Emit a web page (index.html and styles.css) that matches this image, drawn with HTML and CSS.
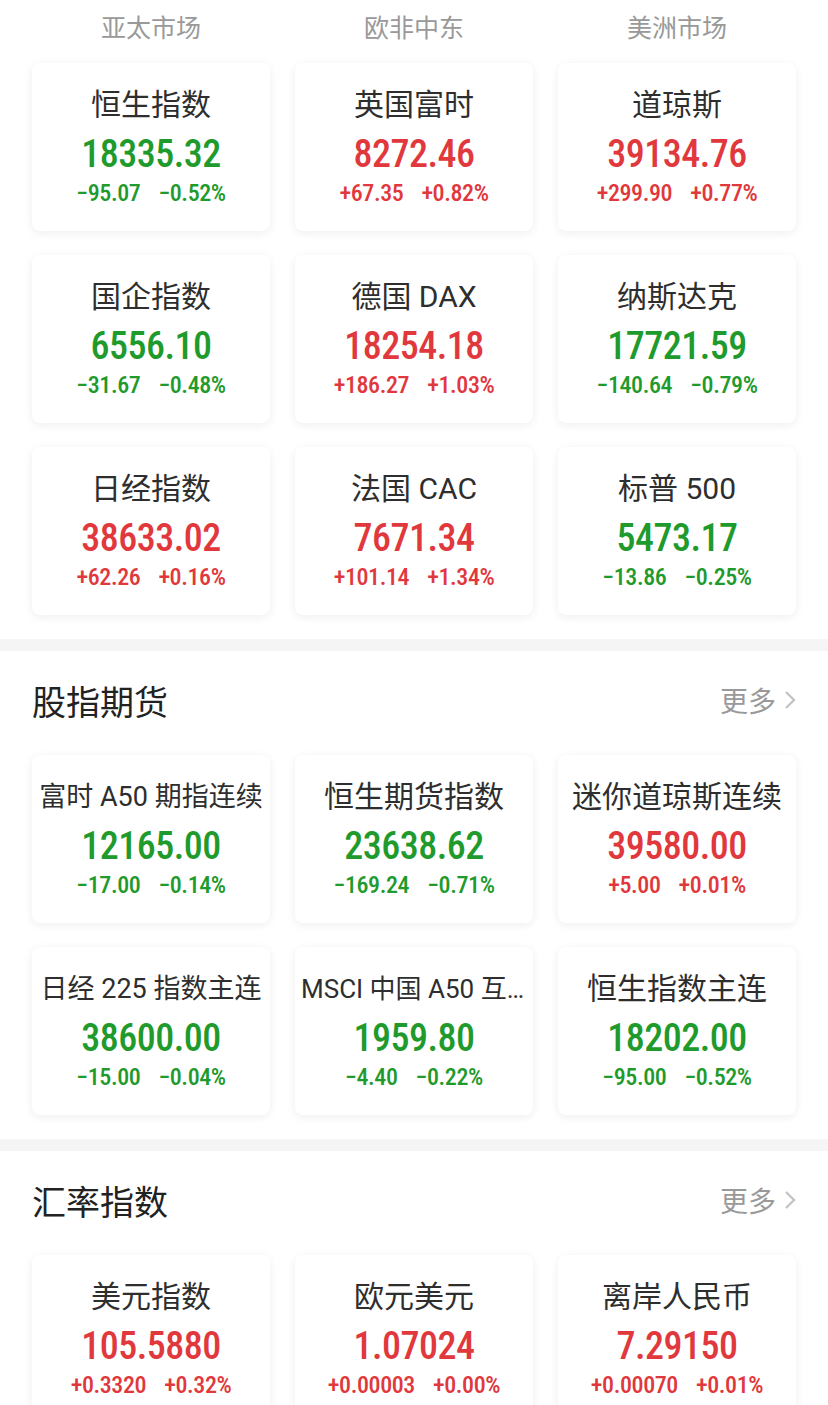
FILE: index.html
```html
<!DOCTYPE html>
<html>
	<head>
		<meta charset="utf-8" />
		<title>全球指数</title>
		<link rel="stylesheet" href="styles.css">
	</head>
	<body>
		<div class="market">
			<div class="tabs">
				<span>亚太市场</span>
				<span>欧非中东</span>
				<span>美洲市场</span>
			</div>
			<div class="grid">
				<div class="card down">
					<div class="name">恒生指数</div>
					<div class="price">18335.32</div>
					<div class="chg"><span>−95.07</span><span>−0.52%</span></div>
				</div>
				<div class="card up">
					<div class="name">英国富时</div>
					<div class="price">8272.46</div>
					<div class="chg"><span>+67.35</span><span>+0.82%</span></div>
				</div>
				<div class="card up">
					<div class="name">道琼斯</div>
					<div class="price">39134.76</div>
					<div class="chg"><span>+299.90</span><span>+0.77%</span></div>
				</div>
				<div class="card down">
					<div class="name">国企指数</div>
					<div class="price">6556.10</div>
					<div class="chg"><span>−31.67</span><span>−0.48%</span></div>
				</div>
				<div class="card up">
					<div class="name">德国 DAX</div>
					<div class="price">18254.18</div>
					<div class="chg"><span>+186.27</span><span>+1.03%</span></div>
				</div>
				<div class="card down">
					<div class="name">纳斯达克</div>
					<div class="price">17721.59</div>
					<div class="chg"><span>−140.64</span><span>−0.79%</span></div>
				</div>
				<div class="card up">
					<div class="name">日经指数</div>
					<div class="price">38633.02</div>
					<div class="chg"><span>+62.26</span><span>+0.16%</span></div>
				</div>
				<div class="card up">
					<div class="name">法国 CAC</div>
					<div class="price">7671.34</div>
					<div class="chg"><span>+101.14</span><span>+1.34%</span></div>
				</div>
				<div class="card down">
					<div class="name">标普 500</div>
					<div class="price">5473.17</div>
					<div class="chg"><span>−13.86</span><span>−0.25%</span></div>
				</div>
			</div>
		</div>

		<div class="section">
			<div class="sec-head">
				<h2>股指期货</h2>
				<a class="more">更多<svg width="12" height="20" viewBox="0 0 12 20"><polyline points="2,2 10,10 2,18" fill="none" stroke="#c4c4c4" stroke-width="2.4" /></svg></a>
			</div>
			<div class="grid">
				<div class="card down">
					<div class="name sm">富时 A50 期指连续</div>
					<div class="price">12165.00</div>
					<div class="chg"><span>−17.00</span><span>−0.14%</span></div>
				</div>
				<div class="card down">
					<div class="name">恒生期货指数</div>
					<div class="price">23638.62</div>
					<div class="chg"><span>−169.24</span><span>−0.71%</span></div>
				</div>
				<div class="card up">
					<div class="name">迷你道琼斯连续</div>
					<div class="price">39580.00</div>
					<div class="chg"><span>+5.00</span><span>+0.01%</span></div>
				</div>
				<div class="card down">
					<div class="name sm">日经 225 指数主连</div>
					<div class="price">38600.00</div>
					<div class="chg"><span>−15.00</span><span>−0.04%</span></div>
				</div>
				<div class="card down">
					<div class="name xs">MSCI 中国 A50 互联互通</div>
					<div class="price">1959.80</div>
					<div class="chg"><span>−4.40</span><span>−0.22%</span></div>
				</div>
				<div class="card down">
					<div class="name">恒生指数主连</div>
					<div class="price">18202.00</div>
					<div class="chg"><span>−95.00</span><span>−0.52%</span></div>
				</div>
			</div>
		</div>

		<div class="section">
			<div class="sec-head">
				<h2>汇率指数</h2>
				<a class="more">更多<svg width="12" height="20" viewBox="0 0 12 20"><polyline points="2,2 10,10 2,18" fill="none" stroke="#c4c4c4" stroke-width="2.4" /></svg></a>
			</div>
			<div class="grid">
				<div class="card up">
					<div class="name">美元指数</div>
					<div class="price">105.5880</div>
					<div class="chg"><span>+0.3320</span><span>+0.32%</span></div>
				</div>
				<div class="card up">
					<div class="name">欧元美元</div>
					<div class="price">1.07024</div>
					<div class="chg"><span>+0.00003</span><span>+0.00%</span></div>
				</div>
				<div class="card up">
					<div class="name">离岸人民币</div>
					<div class="price">7.29150</div>
					<div class="chg"><span>+0.00070</span><span>+0.01%</span></div>
				</div>
			</div>
		</div>
	</body>
</html>
```

FILE: styles.css
```css
body {
	margin: 0;
	padding: 0;
	background-color: #fff;
	font-family: Roboto, "Noto Sans CJK SC", sans-serif;
	color: #333;
}
.market {
	padding: 0 32px 24px;
}
.tabs {
	display: grid;
	grid-template-columns: repeat(3, minmax(0, 1fr));
	column-gap: 25px;
	height: 56px;
	line-height: 58px;
	margin-bottom: 7px;
	text-align: center;
	font-size: 25px;
	color: #999;
}
.grid {
	display: grid;
	grid-template-columns: repeat(3, minmax(0, 1fr));
	column-gap: 25px;
	row-gap: 24px;
}
.card {
	height: 168px;
	box-sizing: border-box;
	padding: 20px 6px 0;
	border-radius: 8px;
	background-color: #fff;
	box-shadow: 0 2px 10px rgba(0, 0, 0, 0.07);
	text-align: center;
}
.name {
	height: 44px;
	line-height: 44px;
	font-size: 30px;
	color: #2e2e2e;
	white-space: nowrap;
	overflow: hidden;
	text-overflow: ellipsis;
}
.name.sm {
	font-size: 27px;
}
.name.xs {
	font-size: 26px;
}
.price {
	height: 52px;
	line-height: 54px;
	font-family: "Roboto Condensed", Roboto, sans-serif;
	font-size: 38px;
	font-weight: 500;
	letter-spacing: -0.5px;
}
.chg {
	display: flex;
	justify-content: center;
	gap: 18px;
	line-height: 28px;
	font-family: "Roboto Condensed", Roboto, sans-serif;
	font-size: 24px;
	font-weight: 500;
	letter-spacing: -0.4px;
}
.up .price, .up .chg {
	color: #e0383c;
}
.down .price, .down .chg {
	color: #1f9a2c;
}
.section {
	border-top: 12px solid #f5f5f5;
	padding: 0 32px 24px;
}
.sec-head {
	display: flex;
	justify-content: space-between;
	align-items: center;
	height: 98px;
	margin-bottom: 6px;
}
.sec-head h2 {
	margin: 0;
	font-size: 34px;
	font-weight: normal;
	color: #222;
}
.more {
	display: flex;
	align-items: center;
	gap: 8px;
	font-size: 28px;
	color: #999;
}
```
